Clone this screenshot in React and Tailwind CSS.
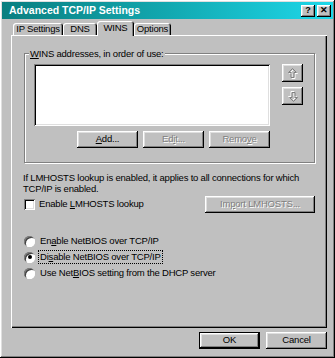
import React from 'react';

// Win98 classic 3D edges
const raised = 'shadow-[inset_-1px_-1px_0_#000,inset_1px_1px_0_#fff,inset_-2px_-2px_0_#808080,inset_2px_2px_0_#dfdfdf]';
const sunken = 'shadow-[inset_1px_1px_0_#808080,inset_-1px_-1px_0_#fff,inset_2px_2px_0_#000,inset_-2px_-2px_0_#dfdfdf]';
const dim = 'text-[#808080] [text-shadow:1px_1px_0_#fff]';

const Btn = ({ children, disabled, className = '' }) => (
    <div className={`h-[17px] flex items-center justify-center bg-[#c0c0c0] ${raised} ${disabled ? dim : 'text-black'} ${className}`}>
        {children}
    </div>
);

const Arrow = ({ down }) => (
    <svg width="10" height="11" viewBox="0 0 10 11" className={down ? 'rotate-180' : ''}>
        <path d="M4.5 0.5 L0.5 4.5 H3 V9.5 H6 V4.5 H8.5 Z" fill="none" stroke="#fff" strokeWidth="1" transform="translate(1 1)" />
        <path d="M4.5 0.5 L0.5 4.5 H3 V9.5 H6 V4.5 H8.5 Z" fill="none" stroke="#808080" strokeWidth="1" />
    </svg>
);

const Radio = ({ checked, children, focus }) => (
    <div className="h-[16px] flex items-center">
        <div className="w-[11px] h-[11px] rounded-full bg-white flex items-center justify-center shadow-[inset_1px_1px_0_#808080,inset_-1px_-1px_0_#fff,inset_2px_2px_0_#404040]">
            {checked && <div className="w-[4px] h-[4px] rounded-full bg-black" />}
        </div>
        <span className={`ml-[4px] leading-[12px] px-[1px] ${focus ? 'outline outline-1 outline-dotted outline-black' : ''}`}>{children}</span>
    </div>
);

const Tab = ({ children, active, w }) => (
    <div
        className={`${w} flex items-center justify-center rounded-t-[3px] bg-[#c0c0c0] shadow-[inset_1px_1px_0_#fff,inset_-1px_0_0_#000,inset_-2px_0_0_#808080]
            ${active ? 'h-[15px] -mb-[1px] relative z-10 pb-[1px]' : 'h-[12px] pt-[1px]'}`}
    >
        {children}
    </div>
);

export default function App() {
    return (
        <div className={`w-[335px] h-[358px] bg-[#c0c0c0] p-[2px] flex flex-col text-[9.5px] tracking-[-0.2px] text-black font-['Liberation_Sans',Arial,sans-serif] ${raised}`}>
            {/* Title bar */}
            <div className="h-[17px] flex items-center pl-[7px] pr-[2px] bg-gradient-to-r from-[#0a7f80] via-[#12a8b0] to-[#1ed8ea]">
                <span className="text-white font-bold text-[10.5px] tracking-[0px]">Advanced TCP/IP Settings</span>
                <div className="ml-auto flex gap-[2px]">
                    <div className={`w-[14px] h-[12px] bg-[#c0c0c0] ${raised} flex items-center justify-center font-bold text-[9px] leading-none`}>?</div>
                    <div className={`w-[14px] h-[12px] bg-[#c0c0c0] ${raised} flex items-center justify-center font-bold text-[9px] leading-none`}>✕</div>
                </div>
            </div>

            {/* Tabs */}
            <div className="mt-[2px] ml-[11px] flex items-end">
                <Tab w="w-[50px]">IP Settings</Tab>
                <Tab w="w-[34px]">DNS</Tab>
                <Tab w="w-[37px]" active>WINS</Tab>
                <Tab w="w-[37px]">Options</Tab>
            </div>

            {/* Panel */}
            <div className="ml-[9px] w-[316px] h-[293px] pt-[12px] pl-[13px] flex flex-col shadow-[inset_1px_1px_0_#fff,inset_-1px_-1px_0_#000,inset_-2px_-2px_0_#808080]">
                <fieldset className="w-[291px] border border-[#808080] shadow-[inset_1px_1px_0_#fff,1px_1px_0_#fff] pt-[4px] pl-[9px] pb-[14px]">
                    <legend className="-ml-[5px] px-[1px] leading-[13px] bg-[#c0c0c0]"><u>W</u>INS addresses, in order of use:</legend>
                    <div className="flex">
                        <div className={`w-[236px] h-[62px] bg-white ${sunken}`} />
                        <div className="ml-[12px] flex flex-col gap-[5px]">
                            <Btn disabled className="w-[21px] h-[18px]"><Arrow /></Btn>
                            <Btn disabled className="w-[21px] h-[18px]"><Arrow down /></Btn>
                        </div>
                    </div>
                    <div className="w-[236px] mt-[5px] flex justify-end gap-[5px]">
                        <Btn className="w-[61px]"><u>A</u>dd...</Btn>
                        <Btn disabled className="w-[61px]">Ed<u>i</u>t...</Btn>
                        <Btn disabled className="w-[61px]">Remo<u>v</u>e</Btn>
                    </div>
                </fieldset>

                <p className="mt-[9px] -ml-[1px] leading-[11px] w-[290px]">
                    If LMHOSTS lookup is enabled, it applies to all connections for which TCP/IP is enabled.
                </p>

                <div className="mt-[2px] w-[291px] flex items-center">
                    <div className={`w-[11px] h-[11px] bg-white ${sunken}`} />
                    <span className="ml-[4px]">Enable <u>L</u>MHOSTS lookup</span>
                    <Btn disabled className="ml-auto w-[110px]">Im<u>p</u>ort LMHOSTS...</Btn>
                </div>

                <div className="mt-[20px] flex flex-col">
                    <Radio>En<u>a</u>ble NetBIOS over TCP/IP</Radio>
                    <Radio checked focus>Di<u>s</u>able NetBIOS over TCP/IP</Radio>
                    <Radio>Use Net<u>B</u>IOS setting from the DHCP server</Radio>
                </div>
            </div>

            {/* Dialog buttons */}
            <div className="mt-[4px] ml-[197px] flex gap-[6px]">
                <div className="w-[61px] h-[17px] border border-black">
                    <Btn className="w-full h-full">OK</Btn>
                </div>
                <Btn className="w-[61px]">Cancel</Btn>
            </div>
        </div>
    );
}
